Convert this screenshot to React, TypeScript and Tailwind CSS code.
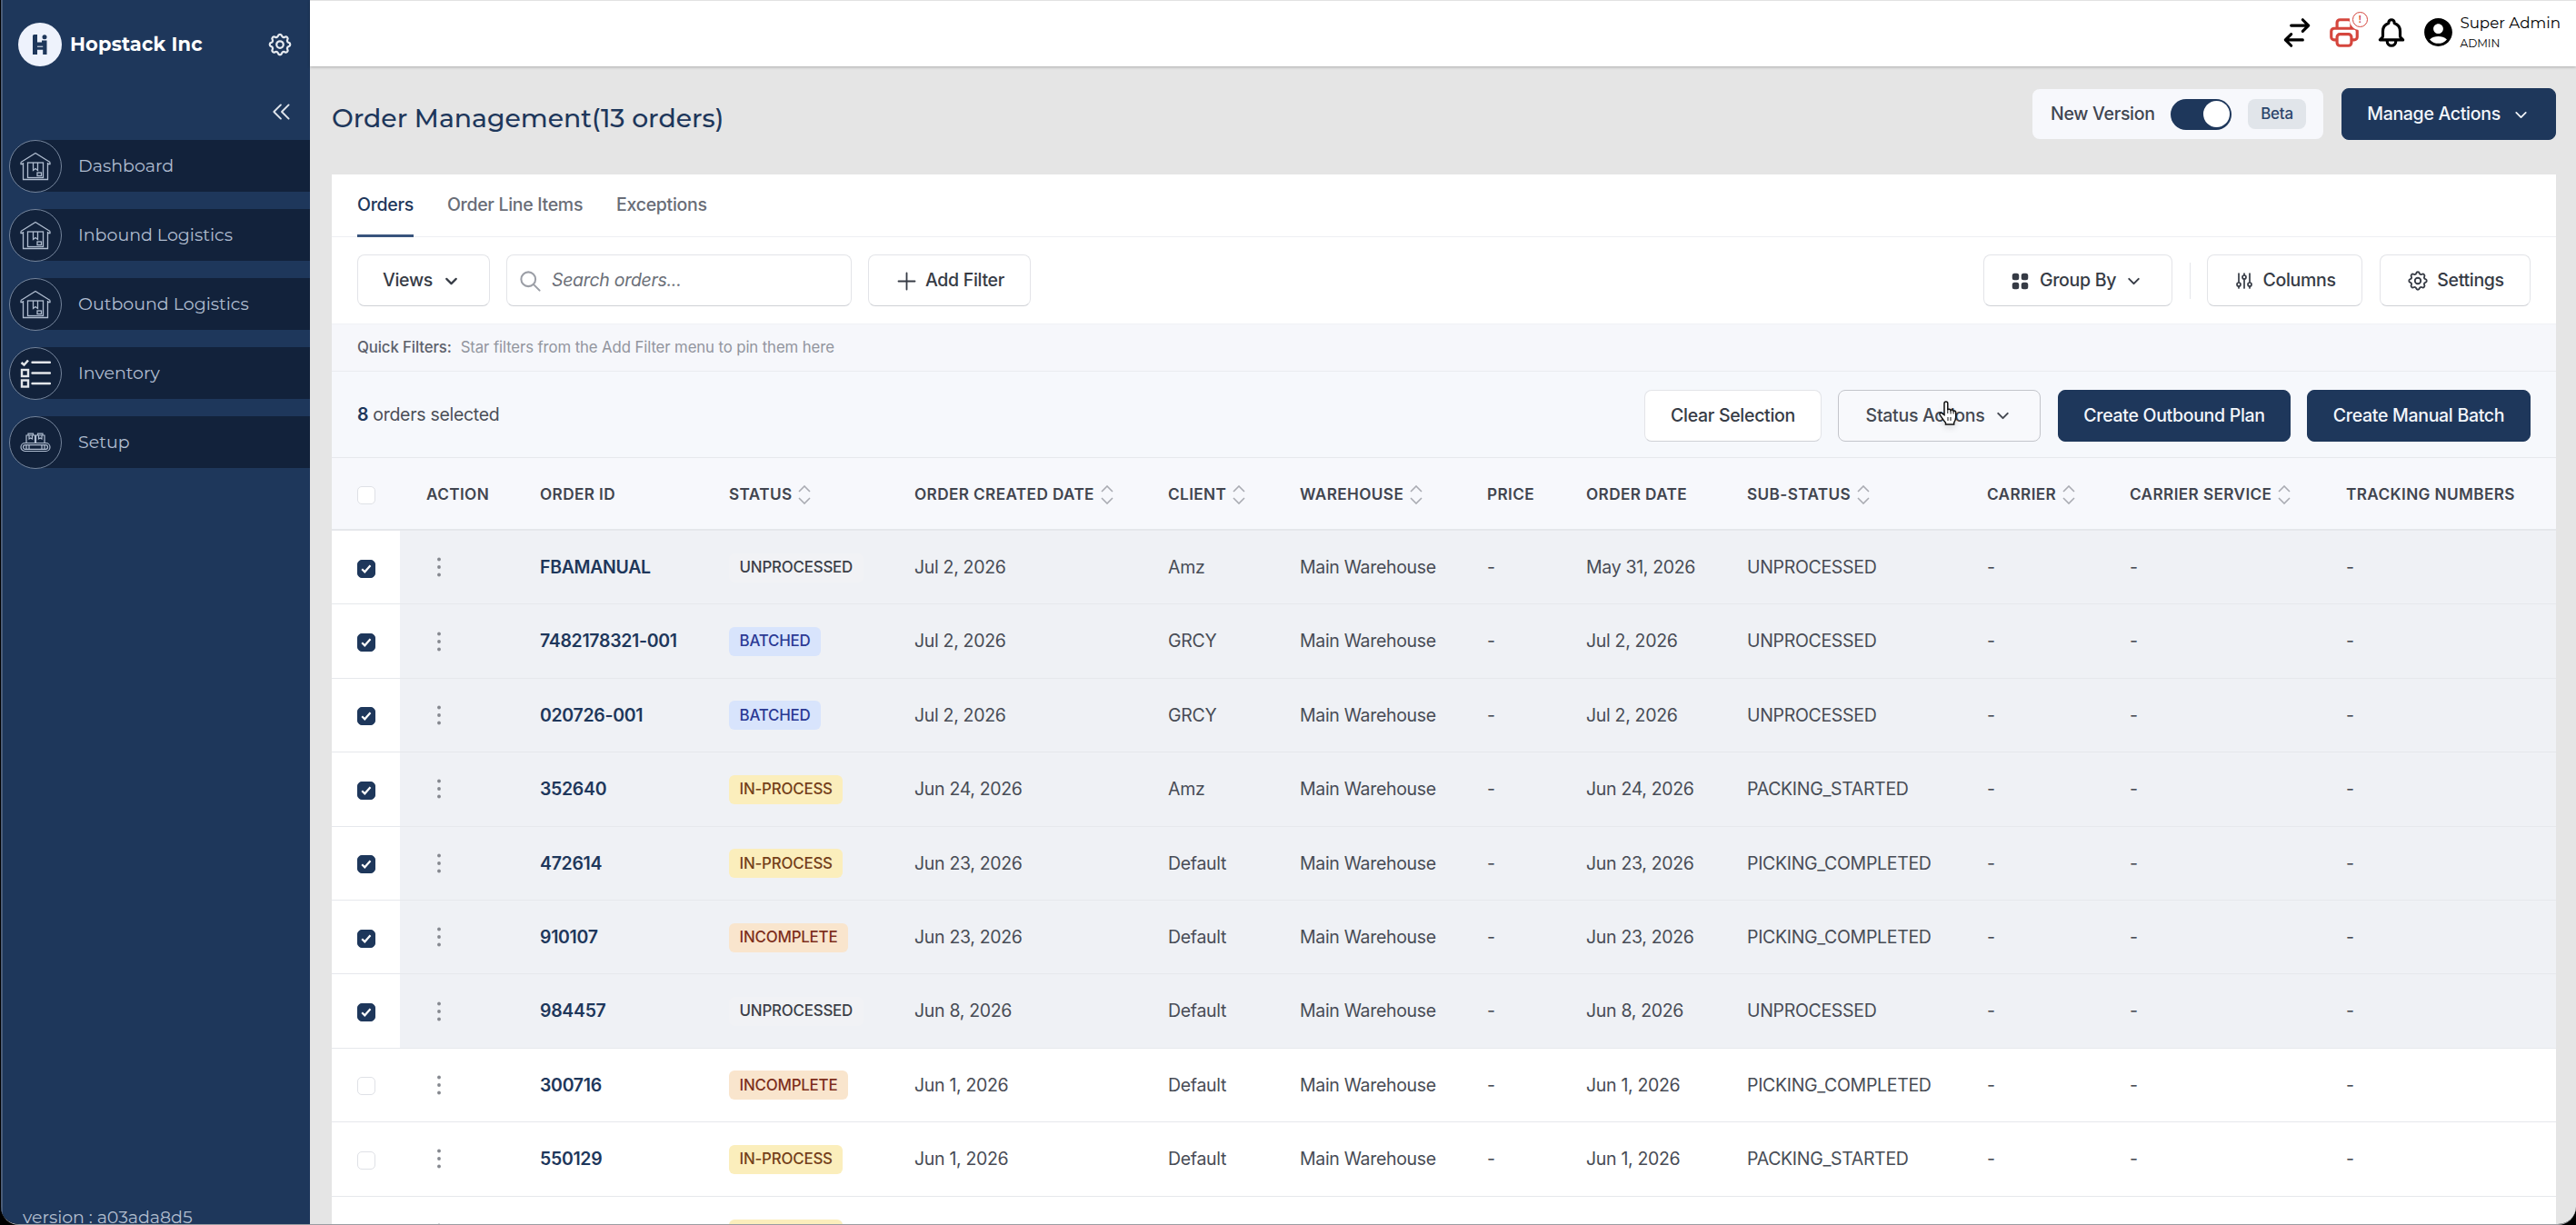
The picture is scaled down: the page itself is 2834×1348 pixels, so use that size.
import type { ReactNode } from "react";
import { ChevronDown } from "lucide-react";
import {
  HiOutlineAdjustments,
  HiOutlineBell,
  HiOutlineChevronDoubleLeft,
  HiOutlineCog,
  HiOutlinePlus,
  HiOutlinePrinter,
  HiOutlineSearch,
  HiOutlineSwitchHorizontal,
  HiViewGrid,
} from "react-icons/hi";
import { MdAccountCircle } from "react-icons/md";
import clsx from "clsx";

type Status = "UNPROCESSED" | "BATCHED" | "IN-PROCESS" | "INCOMPLETE";

interface Order {
  id: string;
  status: Status;
  created: string;
  client: string;
  orderDate: string;
  subStatus: string;
  selected?: boolean;
}

const orders: Order[] = [
  { id: "FBAMANUAL", status: "UNPROCESSED", created: "Jul 2, 2026", client: "Amz", orderDate: "May 31, 2026", subStatus: "UNPROCESSED", selected: true },
  { id: "7482178321-001", status: "BATCHED", created: "Jul 2, 2026", client: "GRCY", orderDate: "Jul 2, 2026", subStatus: "UNPROCESSED", selected: true },
  { id: "020726-001", status: "BATCHED", created: "Jul 2, 2026", client: "GRCY", orderDate: "Jul 2, 2026", subStatus: "UNPROCESSED", selected: true },
  { id: "352640", status: "IN-PROCESS", created: "Jun 24, 2026", client: "Amz", orderDate: "Jun 24, 2026", subStatus: "PACKING_STARTED", selected: true },
  { id: "472614", status: "IN-PROCESS", created: "Jun 23, 2026", client: "Default", orderDate: "Jun 23, 2026", subStatus: "PICKING_COMPLETED", selected: true },
  { id: "910107", status: "INCOMPLETE", created: "Jun 23, 2026", client: "Default", orderDate: "Jun 23, 2026", subStatus: "PICKING_COMPLETED", selected: true },
  { id: "984457", status: "UNPROCESSED", created: "Jun 8, 2026", client: "Default", orderDate: "Jun 8, 2026", subStatus: "UNPROCESSED", selected: true },
  { id: "300716", status: "INCOMPLETE", created: "Jun 1, 2026", client: "Default", orderDate: "Jun 1, 2026", subStatus: "PICKING_COMPLETED" },
  { id: "550129", status: "IN-PROCESS", created: "Jun 1, 2026", client: "Default", orderDate: "Jun 1, 2026", subStatus: "PACKING_STARTED" },
];

const statusStyles: Record<Status, string> = {
  UNPROCESSED: "bg-[#f1f2f5] text-[#3b3f48]",
  BATCHED: "bg-[#d8e4fc] text-[#2b3a94]",
  "IN-PROCESS": "bg-[#fbeebc] text-[#74401a]",
  INCOMPLETE: "bg-[#f9e5cd] text-[#7e2f1c]",
};

const columns = [
  { label: "ACTION" },
  { label: "ORDER ID" },
  { label: "STATUS", sortable: true },
  { label: "ORDER CREATED DATE", sortable: true },
  { label: "CLIENT", sortable: true },
  { label: "WAREHOUSE", sortable: true },
  { label: "PRICE" },
  { label: "ORDER DATE" },
  { label: "SUB-STATUS", sortable: true },
  { label: "CARRIER", sortable: true },
  { label: "CARRIER SERVICE", sortable: true },
  { label: "TRACKING NUMBERS" },
];

const gridCols =
  "grid grid-cols-[75px_125px_208px_204px_279px_145px_206px_109px_177px_264px_157px_238px_260px]";

const WarehouseIcon = () => (
  <svg viewBox="0 0 34 32" className="h-8 w-[34px]" fill="none" stroke="currentColor" strokeWidth="1.3">
    <path d="M1 11.5 17 1.5 33 11.5M1 11.5v2h2.5M33 11.5v2h-2.5M3.5 12v18.5h27V12" />
    <rect x="8.5" y="12" width="17" height="16.5" />
    <path d="M14.5 12v8.500l2.500-2 2.500 2V12" />
    <rect x="19" y="23" width="4.500" height="3.500" />
  </svg>
);

const ChecklistIcon = () => (
  <svg viewBox="0 0 34 32" className="h-8 w-[34px] text-[#e3e6ea]" fill="none" stroke="currentColor">
    <path d="M1.500 4 4.500 6.500 9 1.500" strokeWidth="2.600" />
    <rect x="2" y="12" width="7" height="7" strokeWidth="2.400" />
    <rect x="2" y="23.500" width="7" height="7" strokeWidth="2.400" />
    <path d="M13.500 3.800h19.500M13.500 15.500h19.500M13.500 27h19.500" strokeWidth="2.400" strokeLinecap="round" />
  </svg>
);

const ConveyorIcon = () => (
  <svg viewBox="0 0 34 22" className="h-[22px] w-[34px]" fill="none" stroke="currentColor" strokeWidth="1.200">
    <rect x="1" y="11.500" width="32" height="9" rx="4.500" />
    <rect x="3.500" y="13.700" width="27" height="4.600" rx="2.300" />
    <path d="M7 14v4M10 14v4M24 14v4M27 14v4M7 11V3h9.500v8M17.500 11V3H27v8M9 3V1.200h5.500V3M19.500 3V1.200H25V3" />
    <path d="M10 3v4l1.700-1L13.500 7V3M20.500 3v4l1.700-1L24 7V3" />
  </svg>
);

const menu: { label: string; icon: ReactNode }[] = [
  { label: "Dashboard", icon: <WarehouseIcon /> },
  { label: "Inbound Logistics", icon: <WarehouseIcon /> },
  { label: "Outbound Logistics", icon: <WarehouseIcon /> },
  { label: "Inventory", icon: <ChecklistIcon /> },
  { label: "Setup", icon: <ConveyorIcon /> },
];

const Sidebar = () => (
  <aside className="flex w-[340px] shrink-0 flex-col border-l-2 border-[#4a5c78] bg-[#1e375b] font-['Montserrat','Inter',sans-serif]">
    <div className="flex h-[98px] items-center pl-[17px] pr-[18px]">
      <div className="flex size-12 items-center justify-center rounded-full bg-[#eef2fc]">
        <svg viewBox="0 0 16 22" className="h-[22px] w-4 fill-[#1e375b]">
          <path d="M0 1.500Q0 0 1.500 0H5v8.500h5V6.500h5.500V22h-4.300v-5.200H5V22H0z" />
          <circle cx="13" cy="2.700" r="2.500" />
          <path d="M5 12.700h6.200v1H5z" className="fill-[#eef2fc]" />
        </svg>
      </div>
      <span className="ml-[9px] text-[21px] font-bold tracking-[0.150px] text-white">Hopstack Inc</span>
      <HiOutlineCog className="ml-auto size-[30px] stroke-[1.800] text-[#e6eaf0]" />
    </div>
    <div className="flex h-14 items-start justify-end pr-[18px] pt-3">
      <HiOutlineChevronDoubleLeft className="size-[26px] stroke-[1.800] text-[#dfe4ec]" />
    </div>
    <nav className="flex flex-col gap-[19px]">
      {menu.map((item) => (
        <div key={item.label} className="flex h-[57px] items-center pl-[7px] text-[#b0bdd0]">
          <div className="z-10 flex size-[58px] shrink-0 items-center justify-center rounded-full border border-[#75859c] bg-[#12223b]">
            {item.icon}
          </div>
          <div className="-ml-7 flex h-full flex-1 items-center bg-[#12223b] pl-[46px] pt-px text-[19px]">
            {item.label}
          </div>
        </div>
      ))}
    </nav>
    <div className="mt-auto h-[20px] pl-[22px] text-[19px] leading-[26px] tracking-[-0.050px] text-[#b3bfd0]">
      version : a03ada8d5
    </div>
  </aside>
);

const TopBar = () => (
  <header className="z-10 flex h-[73px] shrink-0 items-center justify-end border-t border-[#e2e2e2] bg-white pb-[3px] pr-[17px] font-['Montserrat','Inter',sans-serif] shadow-[0_1px_3px_rgba(0,0,0,0.250)]">
    <HiOutlineSwitchHorizontal className="mr-[14px] size-[38px]" />
    <div className="relative mr-[14px]">
      <HiOutlinePrinter className="size-[38px] text-[#d5463d]" />
      <div className="absolute -top-[6px] right-[-9px] flex size-[22px] items-center justify-center rounded-full bg-white">
        <div className="flex size-[17px] items-center justify-center rounded-full border-[1.500px] border-[#d5463d] text-[11px] font-semibold leading-none text-[#d5463d]">
          !
        </div>
      </div>
    </div>
    <HiOutlineBell className="mr-[14px] size-[38px]" />
    <MdAccountCircle className="mr-[5px] size-[37px]" />
    <div className="flex flex-col pb-px text-black">
      <span className="text-[16.700px] leading-[24px]">Super Admin</span>
      <span className="text-[12.200px] leading-[21px]">ADMIN</span>
    </div>
  </header>
);

const Button = ({ className, children }: { className?: string; children: ReactNode }) => (
  <button
    className={clsx(
      "flex h-[57px] shrink-0 items-center justify-center whitespace-nowrap rounded-lg border pt-px text-[19.500px] font-medium tracking-[-0.300px]",
      className
    )}
  >
    {children}
  </button>
);

const outline = "border-[#e3e4e8] border-b-[#cfd1d6] bg-white text-[#363b45]";
const primary = "border-[#1e375b] bg-[#1e375b] text-[#f3f6fb]";

const SortIcon = () => (
  <svg viewBox="0 0 14 21" className="ml-[7px] h-[21px] w-3.5" fill="none" stroke="#a9abb2" strokeWidth="1.600">
    <path d="M1 7 7 1l6 6M1 14l6 6 6-6" />
  </svg>
);

const Checkbox = ({ checked }: { checked?: boolean }) => (
  <div
    className={clsx(
      "flex size-[20px] items-center justify-center rounded-[5px] border",
      checked ? "border-[#1e375b] bg-[#1e375b]" : "border-[#dfe1e6] bg-white"
    )}
  >
    {checked && (
      <svg viewBox="0 0 12 10" className="h-2.5 w-3" fill="none" stroke="#fff" strokeWidth="2.200">
        <path d="M1.200 5.200 4.300 8.300 10.500 1.200" />
      </svg>
    )}
  </div>
);

const Dots = () => (
  <svg viewBox="0 0 4 22" className="h-[22px] w-1 fill-[#85888f]">
    <circle cx="2" cy="2.500" r="1.900" />
    <circle cx="2" cy="11" r="1.900" />
    <circle cx="2" cy="19.500" r="1.900" />
  </svg>
);

const StatusBadge = ({ status }: { status: Status }) => (
  <span
    className={clsx(
      "flex h-8 items-center whitespace-nowrap rounded-md px-[11.500px] text-[16.900px] font-medium tracking-[-0.200px]",
      statusStyles[status]
    )}
  >
    {status}
  </span>
);

const HandCursor = () => (
  <svg viewBox="0 0 20 28" className="absolute left-[111px] top-[12px] h-7 w-5 drop-shadow-md" fill="#fff" stroke="#111" strokeWidth="1.500">
    <path d="M6 15.500V3a1.900 1.900 0 0 1 3.800 0v7c.6-1.100 3-1.100 3.300.5.800-.9 2.800-.6 3 .8 1-.7 2.600 0 2.600 1.600v5c0 3-1 4.600-2 6.200V26H7.500v-1.800C5 21.500 3.600 19 1.400 15.800c-1.200-1.900.8-3.200 2.300-1.900z" />
    <path d="M9.800 10v4M13.100 10.500V14.500M16.100 11.500v3" strokeWidth="1" />
    <path d="M10 18v4M13 18v4" strokeWidth="1" />
  </svg>
);

const cell = "flex items-center pl-[29px] pt-px whitespace-nowrap";

const OrderRow = ({ order }: { order: Order }) => (
  <div
    className={clsx(
      gridCols,
      "h-[81.400px] shrink-0 border-b border-[#e6e8ec] text-[19.500px] tracking-[-0.320px] text-[#484c55]",
      order.selected ? "bg-[#eff1f5]" : "bg-white"
    )}
  >
    <div className="flex items-center bg-white pl-7 pt-[3px]">
      <Checkbox checked={order.selected} />
    </div>
    <div className="flex items-center pl-[41px]">
      <Dots />
    </div>
    <div className={clsx(cell, "font-semibold text-[#1e375b]")}>{order.id}</div>
    <div className={cell}>
      <StatusBadge status={order.status} />
    </div>
    <div className={cell}>{order.created}</div>
    <div className={cell}>{order.client}</div>
    <div className={cell}>Main Warehouse</div>
    <div className={cell}>-</div>
    <div className={cell}>{order.orderDate}</div>
    <div className={cell}>{order.subStatus}</div>
    <div className={cell}>-</div>
    <div className={cell}>-</div>
    <div className={cell}>-</div>
  </div>
);

const App = () => (
  <div className="h-[1348px] w-[2834px] overflow-hidden bg-black pl-px font-['Inter',sans-serif]">
    <div className="flex h-full overflow-hidden rounded-b-[20px] border-b border-[#9a9da2]">
      <Sidebar />
      <div className="flex min-w-0 flex-1 flex-col bg-[#e5e5e5]">
        <TopBar />
        <main className="flex min-h-0 flex-1 flex-col pl-6 pr-[22px]">
          <div className="flex h-[119px] shrink-0 items-start pt-6">
            <h1 className="pt-[11px] font-['Montserrat','Inter',sans-serif] text-[28.300px] font-medium leading-[44px] text-[#1e375b]">
              Order Management(13 orders)
            </h1>
            <div className="ml-auto mr-5 mt-px flex h-[55px] w-[320px] items-center rounded-lg bg-[#f7f8fc] pl-5">
              <span className="w-[132px] text-[19.500px] font-medium tracking-[-0.300px] text-[#414651]">New Version</span>
              <div className="flex h-[34px] w-[67px] items-center justify-end rounded-full bg-[#1e375b] pr-0.5">
                <div className="size-[29px] rounded-full bg-white" />
              </div>
              <span className="ml-[18px] flex h-[33px] w-16 items-center justify-center rounded-lg bg-[#e1e5ea] text-[16.900px] font-medium tracking-[-0.200px] text-[#2c456b]">
                Beta
              </span>
            </div>
            <Button className={clsx(primary, "w-[236px] gap-3")}>
              Manage Actions
              <ChevronDown className="size-[21px]" />
            </Button>
          </div>

          <section className="flex min-h-0 flex-1 flex-col overflow-hidden bg-white">
            <div className="flex h-[69px] shrink-0 gap-[37px] border-b border-[#eeeff2] pl-7 text-[19.500px] font-medium tracking-[-0.300px] text-[#696d77]">
              <div className="flex h-[69px] items-center border-b-[3px] border-[#38547c] pt-0.5 text-[#1e375b]">Orders</div>
              <div className="flex items-center">Order Line Items</div>
              <div className="flex items-center">Exceptions</div>
            </div>

            <div className="flex h-[95px] shrink-0 items-center px-7">
              <Button className={clsx(outline, "w-[146px] gap-2.5 pr-1")}>
                Views
                <ChevronDown className="size-[21px]" strokeWidth={2.500} />
              </Button>
              <div className="ml-[18px] flex h-[57px] w-[380px] items-center gap-2.5 rounded-lg border border-[#e3e4e8] border-b-[#cfd1d6] pl-3 pt-px text-[19.500px] italic tracking-[-0.300px] text-[#6b6f78]">
                <HiOutlineSearch className="size-[27px] stroke-[1.800] text-[#9b9ea6]" />
                Search orders...
              </div>
              <Button className={clsx(outline, "ml-[18px] w-[179px] gap-[7px]")}>
                <HiOutlinePlus className="size-[27px] stroke-[1.600]" />
                Add Filter
              </Button>

              <Button className={clsx(outline, "ml-auto w-[208px] gap-[9px] pr-1")}>
                <HiViewGrid className="size-[25px]" />
                Group By
                <ChevronDown className="size-[21px]" strokeWidth={2.300} />
              </Button>
              <div className="mx-[18.500px] h-10 w-px bg-[#e5e6ea]" />
              <Button className={clsx(outline, "w-[171px] gap-2")}>
                <HiOutlineAdjustments className="size-[24px] stroke-[1.700]" />
                Columns
              </Button>
              <Button className={clsx(outline, "ml-[19px] w-[166px] gap-2")}>
                <HiOutlineCog className="size-[26px] stroke-[1.700]" />
                Settings
              </Button>
            </div>

            <div className="flex h-[53px] shrink-0 items-center gap-2.5 border-y border-t-[#f0f1f5] border-b-[#eaecf0] bg-[#f6f7fb] pl-7 pt-px text-[16.800px] tracking-[-0.120px]">
              <span className="font-medium text-[#5d616b]">Quick Filters:</span>
              <span className="text-[#92959e]">Star filters from the Add Filter menu to pin them here</span>
            </div>

            <div className="flex h-[95px] shrink-0 items-center border-b border-[#e6e8ec] bg-[#f6f8fc] px-7 pt-0.5">
              <span className="mr-auto text-[19.500px] tracking-[-0.300px] text-[#4b4f58]">
                <b className="font-semibold text-[#1e375b]">8</b> orders selected
              </span>
              <Button className={clsx(outline, "w-[195px]")}>Clear Selection</Button>
              <div className="relative ml-[18px]">
                <Button className="w-[223px] gap-2.5 border-[#c3c5cb] bg-[#f8f9fc] text-[#454952]">
                  Status Actions
                  <ChevronDown className="size-[21px]" strokeWidth={2.300} />
                </Button>
                <HandCursor />
              </div>
              <Button className={clsx(primary, "ml-[19px] w-[256px]")}>Create Outbound Plan</Button>
              <Button className={clsx(primary, "ml-[18px] w-[246px]")}>Create Manual Batch</Button>
            </div>

            <div
              className={clsx(
                gridCols,
                "h-[80px] shrink-0 border-b-2 border-[#e5e7eb] bg-[#f7f8fc] text-[17.200px] font-semibold tracking-[0.380px] text-[#41454f]"
              )}
            >
              <div className="flex items-center pl-7 pt-1">
                <Checkbox />
              </div>
              {columns.map((col) => (
                <div key={col.label} className="flex items-center whitespace-nowrap pl-[29px] pt-0.5">
                  {col.label}
                  {col.sortable && <SortIcon />}
                </div>
              ))}
            </div>

            {orders.map((order) => (
              <OrderRow key={order.id} order={order} />
            ))}

            {/* next row, only its top edge is in view */}
            <div className={clsx(gridCols, "h-[81.400px] shrink-0")}>
              <div />
              <div className="flex items-center pl-[41px]">
                <Dots />
              </div>
              <div />
              <div className={cell}>
                <StatusBadge status="IN-PROCESS" />
              </div>
            </div>
          </section>
        </main>
      </div>
    </div>
  </div>
);

export default App;
